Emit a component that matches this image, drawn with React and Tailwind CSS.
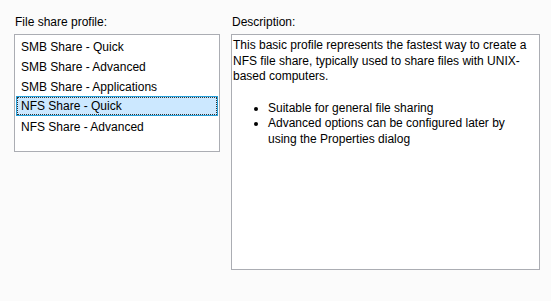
const profiles = [
  "SMB Share - Quick",
  "SMB Share - Advanced",
  "SMB Share - Applications",
  "NFS Share - Quick",
  "NFS Share - Advanced",
];

export default function App() {
  const selected = 3;

  return (
    <div className="w-[551px] h-[301px] bg-[#fbfbfb] text-[12px] text-black font-['Segoe_UI','Liberation_Sans',sans-serif] flex pt-[14px] pl-[14px] gap-[11px]">
      <div className="flex flex-col w-[206px]">
        <div className="h-[20px] leading-[17px] pl-[1px]">File share profile:</div>
        <div className="h-[118px] border border-[#abadb3] bg-white p-[1px] flex flex-col">
          {profiles.map((p, i) => (
            <div
              key={p}
              className={
                i === selected
                  ? "h-[20px] leading-[19px] pl-[4px] bg-[#cce8ff] border border-[#26a0da] outline-1 outline-dotted outline-[#333] -outline-offset-2"
                  : "h-[20px] leading-[21px] pl-[4px] border border-transparent"
              }
            >
              {p}
            </div>
          ))}
        </div>
      </div>
      <div className="flex flex-col w-[309px]">
        <div className="h-[20px] leading-[17px] pl-[1px]">Description:</div>
        <div className="h-[236px] border border-[#abadb3] bg-white px-[1px] pt-[3px] leading-[15.5px]">
          <p>
            This basic profile represents the fastest way to create a NFS file share, typically used to share files with UNIX-based computers.
          </p>
          <ul className="list-disc pl-[35px] pr-[20px] mt-[16px]">
            <li>Suitable for general file sharing</li>
            <li>Advanced options can be configured later by using the Properties dialog</li>
          </ul>
        </div>
      </div>
    </div>
  );
}
